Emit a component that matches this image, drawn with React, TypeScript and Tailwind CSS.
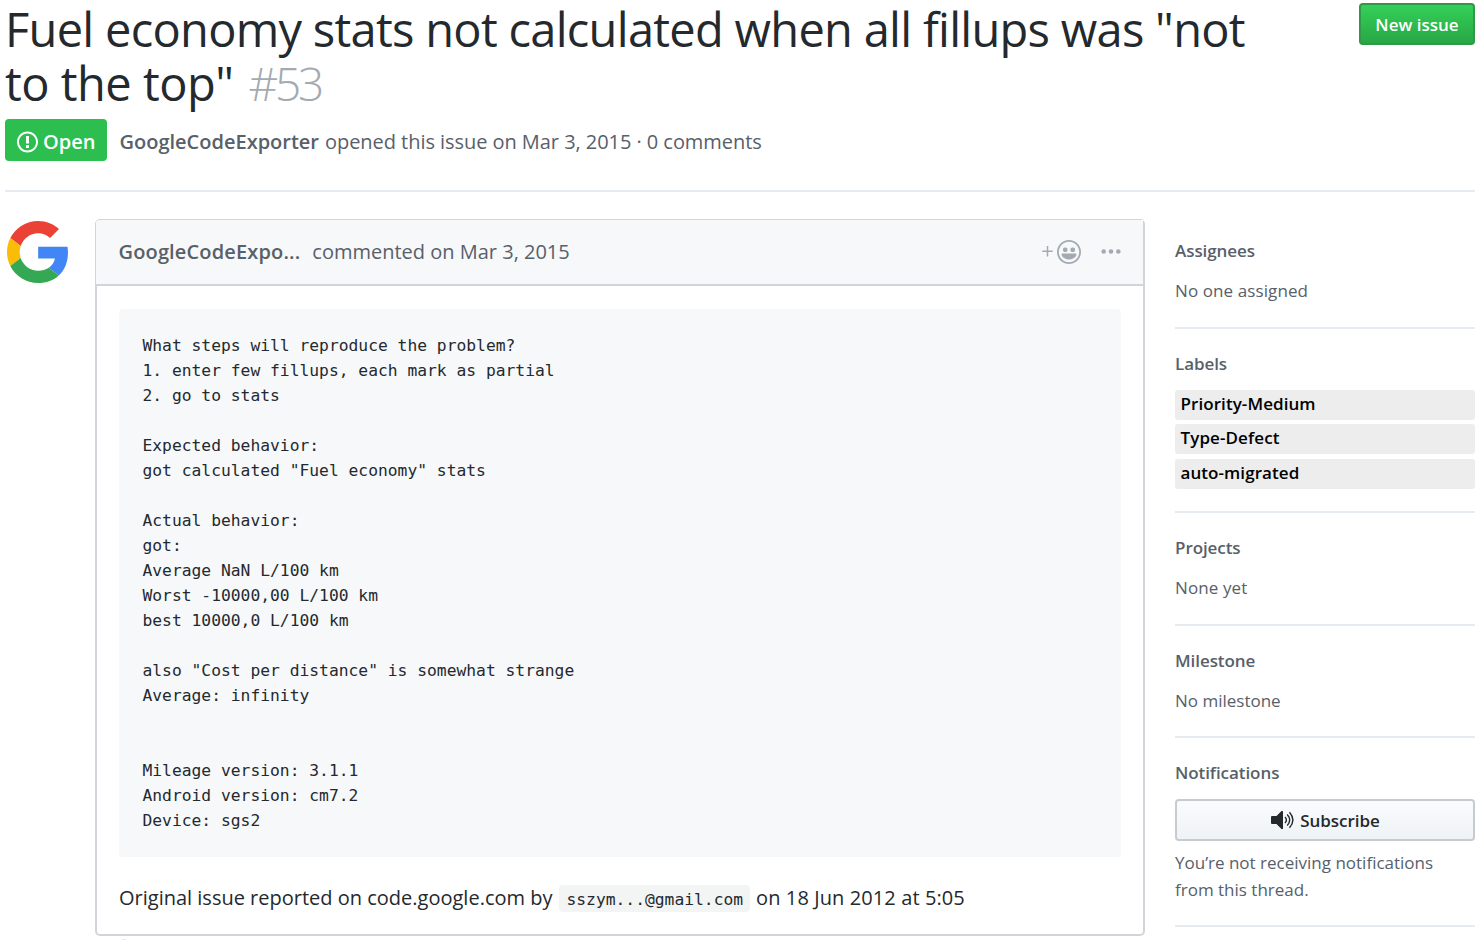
import React from "react";

const code = `What steps will reproduce the problem?
1. enter few fillups, each mark as partial
2. go to stats

Expected behavior:
got calculated "Fuel economy" stats

Actual behavior:
got:
Average NaN L/100 km
Worst -10000,00 L/100 km
best 10000,0 L/100 km

also "Cost per distance" is somewhat strange
Average: infinity


Mileage version: 3.1.1
Android version: cm7.2
Device: sgs2`;

function GoogleLogo() {
  return (
    <svg className="ml-[7px] mt-[2px] h-[62px] w-[61px]" viewBox="0 0 47 48" preserveAspectRatio="none">
      <path fill="#EA4335" d="M24 9.5c3.54 0 6.71 1.22 9.21 3.6l6.85-6.85C35.9 2.38 30.47 0 24 0 14.62 0 6.51 5.38 2.56 13.22l7.98 6.19C12.43 13.72 17.74 9.5 24 9.5z" />
      <path fill="#4285F4" d="M46.98 24.55c0-1.57-.15-3.09-.38-4.55H24v9.02h12.94c-.58 2.96-2.26 5.48-4.78 7.18l7.73 6c4.51-4.18 7.09-10.36 7.09-17.65z" />
      <path fill="#FBBC05" d="M10.53 28.59c-.48-1.45-.76-2.99-.76-4.59s.27-3.14.76-4.59l-7.98-6.19C.92 16.46 0 20.12 0 24c0 3.88.92 7.54 2.56 10.78l7.97-6.19z" />
      <path fill="#34A853" d="M24 48c6.48 0 11.93-2.13 15.89-5.81l-7.73-6c-2.15 1.45-4.92 2.3-8.16 2.3-6.26 0-11.57-4.22-13.47-9.91l-7.98 6.19C6.51 42.62 14.62 48 24 48z" />
    </svg>
  );
}

function SidebarSection({ title, className, children }: { title: string; className: string; children: React.ReactNode }) {
  return (
    <section className={`border-b-2 border-[#e6ebf1] ${className}`}>
      <h2 className="text-[17px] font-semibold leading-[27px] tracking-[-0.07px]">{title}</h2>
      {children}
    </section>
  );
}

export default function App() {
  return (
    <div className="h-[940px] w-[1477px] overflow-hidden bg-white font-['Open_Sans','Noto_Sans',sans-serif] text-[#24292e]">
      <header className="mr-[2px] ml-[5px] h-[192px] border-b-2 border-[#e6ebf1]">
        <div className="flex h-[119px] items-start justify-between">
          <h1 className="whitespace-nowrap pt-[2px] text-[47px] leading-[54px]">
            <div className="tracking-[-0.71px]">Fuel economy stats not calculated when all fillups was "not</div>
            <div className="flex items-baseline">
              <span className="tracking-[-0.5px]">to the top"</span>
              <span className="ml-[15px] text-[46px] font-light tracking-[-3.2px] text-[#a3aab1]">#53</span>
            </div>
          </h1>
          <button className="mt-[3px] h-[42px] w-[116px] rounded-[4px] border-2 border-[#2f9947] bg-linear-to-b from-[#34d058] to-[#28a745] pt-[2px] text-[17px] font-semibold text-white">
            New issue
          </button>
        </div>
        <div className="flex items-center">
          <div className="flex h-[42px] w-[102px] items-center gap-[5px] rounded-[4px] bg-[#2cbe4e] pl-3 text-[20px] font-semibold text-white">
            <svg className="mt-[3px] h-6 w-[21px] shrink-0" viewBox="0 0 14 16" fill="currentColor">
              <path d="M7 2.3c3.14 0 5.7 2.56 5.7 5.7s-2.56 5.7-5.7 5.7A5.71 5.71 0 0 1 1.3 8c0-3.14 2.56-5.7 5.7-5.7zM7 1C3.14 1 0 4.14 0 8s3.14 7 7 7 7-3.14 7-7-3.14-7-7-7zm1 3H6v5h2V4zm0 6H6v2h2v-2z" />
            </svg>
            <span className="pt-[3px]">Open</span>
          </div>
          <p className="ml-[12.5px] flex gap-[6px] whitespace-nowrap pt-[3px] text-[20px] text-[#586069]">
            <strong className="font-semibold">GoogleCodeExporter</strong>
            <span className="tracking-[-0.05px]">opened this issue on Mar 3, 2015 · 0 comments</span>
          </p>
        </div>
      </header>

      <div className="flex pt-[27px]">
        <div className="w-[95px] shrink-0">
          <GoogleLogo />
        </div>
        <div className="shrink-0">
          <article className="h-[717px] w-[1050px] rounded-[5px] border-2 border-[#d1d5da]">
            <div className="-mt-px -ml-px flex h-[66px] items-center rounded-tl-[3px] border-b-2 border-[#d1d5da] bg-[#f6f8fa] pr-[22.5px] pl-[22.5px] text-[20px] text-[#586069]">
              <strong className="font-semibold tracking-[0.15px]">GoogleCodeExpo...</strong>
              <span className="ml-3">commented on Mar 3, 2015</span>
              <div className="ml-auto flex items-center text-[#a3aab1]">
                <svg className="mr-1 h-6 w-[11px]" viewBox="0 0 7 16" fill="currentColor"><path d="M4 4H3v3H0v1h3v3h1V8h3V7H4V4z" /></svg>
                <svg className="h-6 w-6" viewBox="0 0 16 16" fill="currentColor">
                  <path d="M8 0C3.58 0 0 3.58 0 8s3.58 8 8 8 8-3.58 8-8-3.58-8-8-8zm4.81 12.81a6.72 6.72 0 0 1-2.17 1.45c-.83.36-1.72.53-2.64.53-.92 0-1.81-.17-2.64-.53-.81-.34-1.55-.83-2.17-1.45a6.773 6.773 0 0 1-1.45-2.17A6.59 6.59 0 0 1 1.21 8c0-.92.17-1.81.53-2.64.34-.81.83-1.55 1.45-2.17.62-.62 1.36-1.11 2.17-1.45A6.59 6.59 0 0 1 8 1.21c.92 0 1.81.17 2.64.53.81.34 1.55.83 2.17 1.45.62.62 1.11 1.36 1.45 2.17.36.83.53 1.72.53 2.64 0 .92-.17 1.81-.53 2.64-.34.81-.83 1.55-1.45 2.17zM4 6.8v-.59c0-.66.53-1.19 1.2-1.19h.59c.66 0 1.19.53 1.19 1.19v.59c0 .67-.53 1.2-1.19 1.2H5.2C4.53 8 4 7.47 4 6.8zm5 0v-.59c0-.66.53-1.19 1.2-1.19h.59c.66 0 1.19.53 1.19 1.19v.59c0 .67-.53 1.2-1.19 1.2h-.59C9.53 8 9 7.47 9 6.8zm4 3.2c-.72 1.88-2.91 3-5 3s-4.28-1.13-5-3c-.14-.39.23-1 .66-1h8.59c.41 0 .89.61.75 1z" />
                </svg>
                <svg className="ml-5 h-6 w-[20px]" viewBox="0 0 20 24" fill="currentColor">
                  <circle cx="2.7" cy="11.5" r="2.3" /><circle cx="10" cy="11.5" r="2.3" /><circle cx="17.3" cy="11.5" r="2.3" />
                </svg>
              </div>
            </div>
            <div className="px-[22px] pt-[23px]">
              <pre className="h-[548px] rounded-[4px] bg-[#f6f8fa] pt-6 pl-[23.5px] font-['DejaVu_Sans_Mono',monospace] text-[16.31px] leading-[25px]">{code}</pre>
              <p className="mt-[23px] flex items-center whitespace-nowrap text-[20px] leading-9">
                <span>Original issue reported on code.google.com by</span>
                <code className="mr-[6px] ml-[7px] h-[27px] rounded-[4px] bg-[#f3f4f4] px-[7px] font-['DejaVu_Sans_Mono',monospace] text-[16.31px] leading-[29px]">sszym...@gmail.com</code>
                <span className="tracking-[0.1px]">on 18 Jun 2012 at 5:05</span>
              </p>
            </div>
          </article>
          <div className="mt-[3px] ml-[27px] h-px w-[4px] bg-[#e6ebf1]" />
        </div>
        <aside className="ml-[30px] w-[300px] shrink-0 pt-[18px] text-[17px] text-[#586069]">
          <SidebarSection title="Assignees" className="h-[92px]">
            <p className="mt-[13px] leading-[27px] tracking-[0.1px]">No one assigned</p>
          </SidebarSection>
          <SidebarSection title="Labels" className="h-[184px] pt-[21px]">
            <ul className="mt-[13px] flex flex-col gap-[4.4px] font-semibold leading-[28px] text-black">
              <li className="h-[30px] rounded-[3px] bg-[#ededed] pl-[5.5px] tracking-[0.07px]">Priority-Medium</li>
              <li className="h-[30px] rounded-[3px] bg-[#ededed] pl-[5.5px] tracking-[0.1px]">Type-Defect</li>
              <li className="h-[30px] rounded-[3px] bg-[#ededed] pl-[5.5px] tracking-[0.07px]">auto-migrated</li>
            </ul>
          </SidebarSection>
          <SidebarSection title="Projects" className="h-[113px] pt-[21px]">
            <p className="mt-[13px] leading-[27px] tracking-[0.1px]">None yet</p>
          </SidebarSection>
          <SidebarSection title="Milestone" className="h-[112px] pt-[21px]">
            <p className="mt-[13px] leading-[27px]">No milestone</p>
          </SidebarSection>
          <SidebarSection title="Notifications" className="h-[189px] pt-[21px]">
            <button className="mt-[13px] flex h-[42px] w-full items-center justify-center gap-[6px] rounded-[4px] border-2 border-[#c7cbcf] bg-linear-to-b from-[#fafbfc] to-[#eff3f6] font-semibold text-[#24292e]">
              <svg className="h-6 w-6" viewBox="0 0 24 24" fill="none" stroke="currentColor">
                <path fill="currentColor" stroke="none" d="M2 8h4.500l5-5H12.500q.5 0 .5.500v17q0 .5-.5.500h-1L6.500 16H2q-1 0-1-1V9q0-1 1-1z" />
                <path strokeWidth="1.4" d="M15 9q2.800 3 0 6M17.200 6.500q5 5.500 0 11M19.500 4.200q6.800 7.800 0 15.600" />
              </svg>
              <span className="pt-px tracking-[-0.05px]">Subscribe</span>
            </button>
            <p className="mt-2 leading-[27px]">You’re not receiving notifications<br />from this thread.</p>
          </SidebarSection>
        </aside>
      </div>
    </div>
  );
}
